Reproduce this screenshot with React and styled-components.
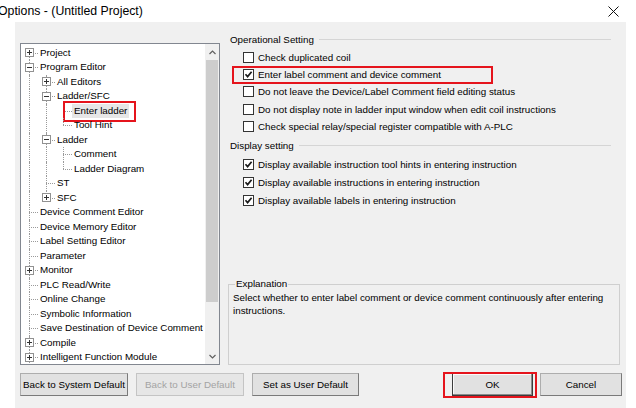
import React from 'react';
import styled, { createGlobalStyle, css } from 'styled-components';

const GlobalStyle = createGlobalStyle`
  html, body {
    margin: 0;
    padding: 0;
    background: #fff;
  }
  body {
    font-family: "Liberation Sans", Arial, sans-serif;
    font-size: 9.8px;
    color: #000;
  }
`;

const RED = '#e5141c';

const Window = styled.div`
  width: 636px;
  height: 408px;
  display: flex;
  flex-direction: column;
  background: #fff;
  overflow: hidden;
`;

const TitleBar = styled.div`
  height: 22px;
  flex-shrink: 0;
  display: flex;
  align-items: center;
  justify-content: space-between;
  padding-right: 17px;
`;

const Title = styled.span`
  font-size: 12.3px;
  margin-left: -2px;
  white-space: nowrap;
`;

const Body = styled.div`
  flex: 1;
  display: flex;
  padding: 0 10px 0 15px;
  min-height: 0;
`;

const Panel = styled.div`
  flex: 1;
  background: #f0f0f0;
  display: flex;
  flex-direction: column;
  padding: 8px 4px 0 5px;
`;

const MainRow = styled.div`
  height: 335px;
  display: flex;
  gap: 8px;
`;

const TreeBox = styled.div`
  width: 200px;
  height: 322px;
  margin-top: 13px;
  box-sizing: border-box;
  border: 1px solid #828790;
  background: #fff;
  display: flex;
`;

const TreeList = styled.div`
  flex: 1;
  overflow: hidden;
  padding-top: 1.5px;
`;

const Row = styled.div`
  height: 14.5px;
  display: flex;
  align-items: stretch;
  white-space: nowrap;
`;

const lineColor = '#9a9a9a';

const Cell = styled.span`
  position: relative;
  width: 17px;
  flex-shrink: 0;

  &::before {
    content: '';
    position: absolute;
    left: 8px;
    border-left: 1px dotted ${lineColor};
    ${({ $v }) =>
      $v === 'full'
        ? css`top: 0; bottom: 0;`
        : $v === 'top'
        ? css`top: 0; height: 50%;`
        : $v === 'bottom'
        ? css`top: 50%; bottom: 0;`
        : css`display: none;`}
  }

  &::after {
    content: '';
    position: absolute;
    left: 8px;
    right: 0;
    top: 50%;
    border-top: 1px dotted ${lineColor};
    display: ${({ $h }) => ($h ? 'block' : 'none')};
  }
`;

const Expander = styled.svg`
  position: absolute;
  left: 4px;
  top: 50%;
  margin-top: -4.5px;
  z-index: 1;
`;

const Label = styled.span`
  position: relative;
  padding: 0 2px;
  line-height: 14.5px;
  background: ${({ $selected }) => ($selected ? '#e6e6e6' : 'transparent')};

  ${({ $marked }) =>
    $marked &&
    css`
      &::after {
        content: '';
        position: absolute;
        top: -3px;
        bottom: -4px;
        left: -9px;
        right: -7px;
        border: 2px solid ${RED};
      }
    `}
`;

const ScrollBar = styled.div`
  width: 14px;
  background: #f0f0f0;
  display: flex;
  flex-direction: column;
`;

const ScrollArrow = styled.div`
  height: 16px;
  display: flex;
  align-items: center;
  justify-content: center;
`;

const Thumb = styled.div`
  height: 242px;
  margin: 0 1px;
  background: #cdcdcd;
`;

const Track = styled.div`
  flex: 1;
`;

const RightCol = styled.div`
  width: 392px;
  display: flex;
  flex-direction: column;
`;

const GroupHeader = styled.div`
  height: 16px;
  display: flex;
  align-items: center;
  gap: 5px;
  padding-left: 2px;
  margin-right: 9px;
  margin-top: ${({ $top }) => $top || 0}px;
  margin-bottom: 1.5px;

  &::after {
    content: '';
    flex: 1;
    height: 1px;
    background: #d5d5d5;
  }
`;

const CheckRow = styled.div`
  position: relative;
  height: ${({ $h }) => $h}px;
  display: flex;
  align-items: center;
  gap: 4px;
  padding-left: 15px;
  white-space: nowrap;

  ${({ $marked }) =>
    $marked &&
    css`
      &::after {
        content: '';
        position: absolute;
        left: 4px;
        width: 261px;
        top: 0;
        bottom: -1px;
        box-sizing: border-box;
        border: 2px solid ${RED};
      }
    `}
`;

const Box = styled.span`
  width: 11px;
  height: 11px;
  box-sizing: border-box;
  border: 1px solid #333;
  background: #fff;
  display: flex;
  align-items: center;
  justify-content: center;
  flex-shrink: 0;
`;

const Explanation = styled.fieldset`
  margin: auto 0 0 0;
  height: 87px;
  box-sizing: border-box;
  border: 1px solid #cfcfcf;
  padding: 0 4px;
  min-inline-size: 0;
`;

const Legend = styled.legend`
  padding: 0 1px;
  margin-left: 2px;
  line-height: 12px;
`;

const ExplainText = styled.p`
  margin: 1px 0 0;
  line-height: 13px;
  white-space: nowrap;
`;

const ButtonRow = styled.div`
  height: 23px;
  margin-top: 8px;
  display: flex;
`;

const ButtonGroup = styled.div`
  display: flex;
  gap: ${({ $gap }) => $gap}px;
  margin-left: ${({ $push }) => ($push ? 'auto' : '0')};
`;

const Button = styled.button`
  position: relative;
  width: ${({ $w }) => $w}px;
  height: 23px;
  padding: 0;
  font-family: inherit;
  font-size: 9.8px;
  color: #000;
  background: #e1e1e1;
  border: 1px solid #adadad;
  border-right-color: #7a7a7a;
  border-bottom-color: #7a7a7a;
  box-sizing: border-box;

  &:disabled {
    color: #a3a3a3;
    background: #e6e6e6;
    border-color: #c4c4c4;
  }

  ${({ $default }) =>
    $default &&
    css`
      border: 1px solid #3c3c3c;
      box-shadow: inset -1px -1px 0 #8a8a8a, inset 1px 1px 0 #fafafa;
    `}

  ${({ $marked }) =>
    $marked &&
    css`
      &::after {
        content: '';
        position: absolute;
        top: -2px;
        bottom: -3px;
        left: -10px;
        right: -5px;
        border: 2px solid ${RED};
      }
    `}
`;

const treeItems = [
  { label: 'Project', depth: 0, exp: '+' },
  { label: 'Program Editor', depth: 0, exp: '-' },
  { label: 'All Editors', depth: 1, exp: '+' },
  { label: 'Ladder/SFC', depth: 1, exp: '-' },
  { label: 'Enter ladder', depth: 2, selected: true },
  { label: 'Tool Hint', depth: 2 },
  { label: 'Ladder', depth: 1, exp: '-' },
  { label: 'Comment', depth: 2 },
  { label: 'Ladder Diagram', depth: 2 },
  { label: 'ST', depth: 1 },
  { label: 'SFC', depth: 1, exp: '+' },
  { label: 'Device Comment Editor', depth: 0 },
  { label: 'Device Memory Editor', depth: 0 },
  { label: 'Label Setting Editor', depth: 0 },
  { label: 'Parameter', depth: 0 },
  { label: 'Monitor', depth: 0, exp: '+' },
  { label: 'PLC Read/Write', depth: 0 },
  { label: 'Online Change', depth: 0 },
  { label: 'Symbolic Information', depth: 0 },
  { label: 'Save Destination of Device Comment', depth: 0 },
  { label: 'Compile', depth: 0, exp: '+' },
  { label: 'Intelligent Function Module', depth: 0, exp: '+' },
];

// does level L continue below row i (a later sibling exists)?
function continues(i, L) {
  for (let j = i + 1; j < treeItems.length; j++) {
    if (treeItems[j].depth < L) return false;
    if (treeItems[j].depth === L) return true;
  }
  return L === 0;
}

function ExpanderIcon({ sign }) {
  return (
    <Expander width="9" height="9" viewBox="0 0 9 9">
      <rect x="0.5" y="0.5" width="8" height="8" fill="#fff" stroke="#919191" />
      <line x1="2" y1="4.5" x2="7" y2="4.5" stroke="#333" />
      {sign === '+' && <line x1="4.5" y1="2" x2="4.5" y2="7" stroke="#333" />}
    </Expander>
  );
}

function TreeRow({ item, index }) {
  const cells = [];
  for (let L = 0; L < item.depth; L++) {
    cells.push(<Cell key={L} $v={continues(index, L) ? 'full' : 'none'} />);
  }
  const below = continues(index, item.depth);
  let v = below ? 'full' : 'top';
  if (index === 0) v = 'bottom';
  cells.push(
    <Cell key="own" $v={v} $h>
      {item.exp && <ExpanderIcon sign={item.exp} />}
    </Cell>
  );
  return (
    <Row>
      {cells}
      <Label $selected={item.selected} $marked={item.selected}>
        {item.label}
      </Label>
    </Row>
  );
}

function Chevron({ up }) {
  return (
    <svg width="7" height="5" viewBox="0 0 7 5">
      <path
        d={up ? 'M0.5 4 L3.5 1 L6.5 4' : 'M0.5 1 L3.5 4 L6.5 1'}
        fill="none"
        stroke="#606060"
        strokeWidth="1.2"
      />
    </svg>
  );
}

function CheckBox({ checked }) {
  return (
    <Box>
      {checked && (
        <svg width="9" height="9" viewBox="0 0 9 9">
          <path d="M1.5 4.3 L3.6 6.6 L7.6 1.8" fill="none" stroke="#1a1a1a" strokeWidth="1.7" />
        </svg>
      )}
    </Box>
  );
}

const operational = [
  { text: 'Check duplicated coil' },
  { text: 'Enter label comment and device comment', checked: true, marked: true },
  { text: 'Do not leave the Device/Label Comment field editing status' },
  { text: 'Do not display note in ladder input window when edit coil instructions' },
  { text: 'Check special relay/special register compatible with A-PLC' },
];

const display = [
  'Display available instruction tool hints in entering instruction',
  'Display available instructions in entering instruction',
  'Display available labels in entering instruction',
];

export default function App() {
  return (
    <Window>
      <GlobalStyle />
      <TitleBar>
        <Title>Options - (Untitled Project)</Title>
        <svg width="11" height="11" viewBox="0 0 11 11">
          <path d="M0.5 0.5 L10.5 10.5 M10.5 0.5 L0.5 10.5" stroke="#111" strokeWidth="1" />
        </svg>
      </TitleBar>
      <Body>
        <Panel>
          <MainRow>
            <TreeBox>
              <TreeList>
                {treeItems.map((item, i) => (
                  <TreeRow key={item.label} item={item} index={i} />
                ))}
              </TreeList>
              <ScrollBar>
                <ScrollArrow>
                  <Chevron up />
                </ScrollArrow>
                <Thumb />
                <Track />
                <ScrollArrow>
                  <Chevron />
                </ScrollArrow>
              </ScrollBar>
            </TreeBox>

            <RightCol>
              <GroupHeader $top={1}>Operational Setting</GroupHeader>
              {operational.map((o) => (
                <CheckRow key={o.text} $h={17.3} $marked={o.marked}>
                  <CheckBox checked={o.checked} />
                  {o.text}
                </CheckRow>
              ))}
              <GroupHeader $top={3}>Display setting</GroupHeader>
              {display.map((t) => (
                <CheckRow key={t} $h={18}>
                  <CheckBox checked />
                  {t}
                </CheckRow>
              ))}
              <Explanation>
                <Legend>Explanation</Legend>
                <ExplainText>
                  Select whether to enter label comment or device comment continuously after entering
                  <br />
                  instructions.
                </ExplainText>
              </Explanation>
            </RightCol>
          </MainRow>

          <ButtonRow>
            <ButtonGroup $gap={8}>
              <Button $w={108}>Back to System Default</Button>
              <Button $w={108} disabled>
                Back to User Default
              </Button>
              <Button $w={107}>Set as User Default</Button>
            </ButtonGroup>
            <ButtonGroup $gap={7} $push>
              <Button $w={81} $default $marked>
                OK
              </Button>
              <Button $w={82}>Cancel</Button>
            </ButtonGroup>
          </ButtonRow>
        </Panel>
      </Body>
    </Window>
  );
}
